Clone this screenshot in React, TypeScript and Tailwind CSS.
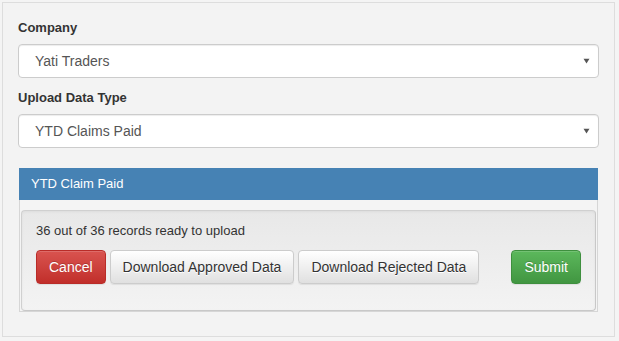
import React from "react";

const btnBase =
  "h-[34px] px-[12px] rounded-[4px] border text-[14px] leading-[20px] whitespace-nowrap shadow-[inset_0_1px_0_rgba(255,255,255,0.15),0_1px_1px_rgba(0,0,0,0.075)]";

function Caret() {
  return (
    <svg width="7" height="6" viewBox="0 0 7 6" className="shrink-0">
      <path d="M0.5 0.8 L6.5 0.8 L3.5 5.5 Z" fill="#555" />
    </svg>
  );
}

function SelectBox({ value }: { value: string }) {
  return (
    <div className="flex h-[34px] items-center justify-between rounded-[4px] border border-[#ccc] bg-white pl-[16px] pr-[8px] shadow-[inset_0_1px_1px_rgba(0,0,0,0.075)]">
      <span className="text-[14px] text-[#555]">{value}</span>
      <Caret />
    </div>
  );
}

export default function App() {
  return (
    <div className="h-[341px] w-[619px] bg-[#f4f4f4] pt-[2px] pl-[2px] font-['Liberation_Sans',Arial,sans-serif] text-[#333]">
      <div className="w-[613px] border border-[#dddddd] bg-[#f3f3f3] px-[15px] pt-[15px] pb-[24px]">
        <label className="mb-[7px] block pt-[1px] text-[13px] font-bold leading-[18px]">Company</label>
        <SelectBox value="Yati Traders" />

        <label className="mt-[10px] mb-[7px] block pt-[1px] text-[13px] font-bold leading-[18px]">
          Upload Data Type
        </label>
        <SelectBox value="YTD Claims Paid" />

        <div className="mt-[20px] ml-[1px] mr-[1px]">
          <div className="flex h-[32px] items-center bg-[#4682b4] pl-[12px] text-[13px] text-white">
            YTD Claim Paid
          </div>
          <div className="border-x border-b border-[#d6d6d6] bg-[#f4f4f4] px-[1px] pt-[10px]">
            <div className="rounded-[4px] border border-[#d0d0d0] border-r-[#c8c8c8] border-b-[#c8c8c8] bg-linear-to-b from-[#e8e8e8] to-[#f3f3f3] pl-[14px] pr-[14px] pt-[10px] pb-[26px] shadow-[inset_0_1px_3px_rgba(0,0,0,0.05)]">
              <p className="mb-[10px] text-[13px] leading-[19px]">36 out of 36 records ready to upload</p>
              <div className="flex items-center">
                <button className={`${btnBase} border-[#b92c28] bg-linear-to-b from-[#d9534f] to-[#c12e2a] text-white [text-shadow:0_-1px_0_rgba(0,0,0,0.2)]`}>
                  Cancel
                </button>
                <button className={`${btnBase} ml-[4px] border-[#cccccc] bg-linear-to-b from-white to-[#e0e0e0] text-[#333] [text-shadow:0_1px_0_#fff]`}>
                  Download Approved Data
                </button>
                <button className={`${btnBase} ml-[4px] border-[#cccccc] bg-linear-to-b from-white to-[#e0e0e0] text-[#333] [text-shadow:0_1px_0_#fff]`}>
                  Download Rejected Data
                </button>
                <button className={`${btnBase} ml-auto border-[#3e8f3e] bg-linear-to-b from-[#5cb85c] to-[#419641] text-white [text-shadow:0_-1px_0_rgba(0,0,0,0.2)]`}>
                  Submit
                </button>
              </div>
            </div>
          </div>
        </div>
      </div>
    </div>
  );
}
